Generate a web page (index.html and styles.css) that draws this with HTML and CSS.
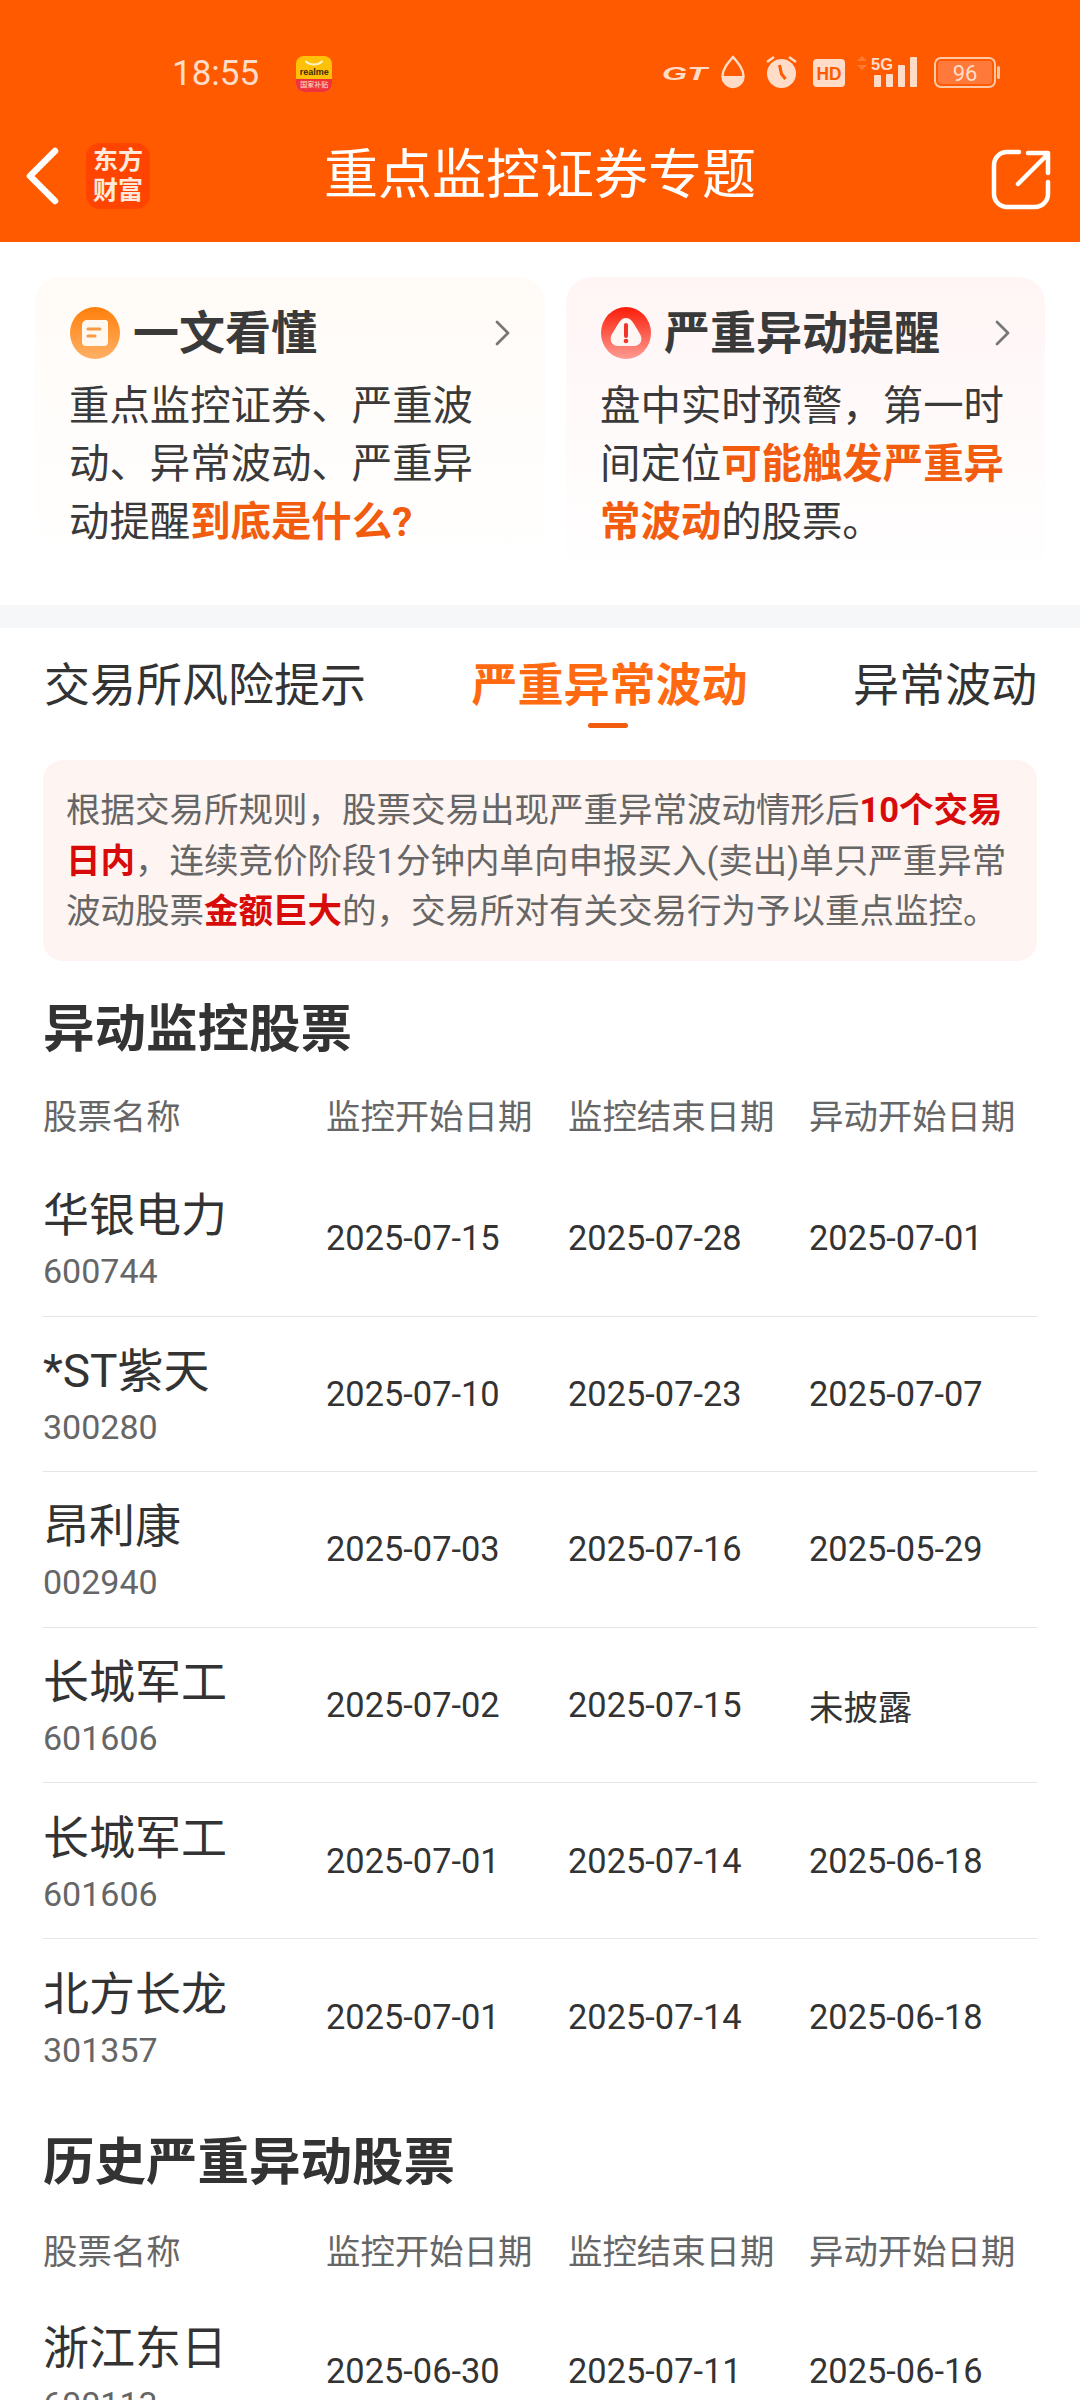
FILE: index.html
```html
<!DOCTYPE html>
<html lang="zh-CN">
  <head>
    <meta charset="UTF-8" />
    <meta name="viewport" content="width=device-width, initial-scale=1.0" />
    <title>重点监控证券专题</title>
    <link rel="stylesheet" href="styles.css">
  </head>
  <body>
    <div class="page">
      <header class="top">
        <div class="status-bar">
          <span class="time">18:55</span>
          <div class="app-badge">
            <svg class="app-smile" width="20" height="7" viewBox="0 0 20 7"><path d="M2 1.500c4 4 12 4 16 0" fill="none" stroke="#fff3c0" stroke-width="2" stroke-linecap="round"/></svg>
            <span class="app-name">realme</span>
            <span class="app-foot">国家补贴</span>
          </div>
          <svg class="status-icons" width="342" height="36" viewBox="660 54 342 36">
            <text x="662" y="80" font-family="Liberation Sans" font-size="19" font-weight="700" font-style="italic" fill="#ffdcc8" textLength="45" lengthAdjust="spacingAndGlyphs">GT</text>
            <path d="M733 57c5 6 10.500 12 10.500 19a10.500 11 0 0 1-21 0c0-7 5.500-13 10.500-19z" fill="none" stroke="#ffdcc8" stroke-width="2.400"/>
            <path d="M722.500 76h21a10.500 11.500 0 0 1-21 0z" fill="#ffdcc8"/>
            <circle cx="781.500" cy="73.500" r="14.500" fill="#ffdcc8"/>
            <path d="M779.500 65l2 9 4 5" fill="none" stroke="#ff5a00" stroke-width="3"/>
            <path d="M767 62l7-5M796 62l-7-5" stroke="#ffdcc8" stroke-width="2.600"/>
            <rect x="813" y="59" width="32" height="28" rx="4" fill="#ffdcc8"/>
            <text x="829" y="80" text-anchor="middle" font-family="Liberation Sans" font-size="19" font-weight="700" fill="#ff5a00" textLength="25" lengthAdjust="spacingAndGlyphs">HD</text>
            <path d="M862 56l5 5h-10zM862 70l5-5h-10z" fill="#ff7a33"/>
            <text x="871" y="70" font-family="Liberation Sans" font-size="17" font-weight="700" fill="#ffdcc8" textLength="22" lengthAdjust="spacingAndGlyphs">5G</text>
            <rect x="874" y="75" width="7" height="12" rx="1" fill="#ffdcc8"/>
            <rect x="886" y="74" width="7" height="13" rx="1" fill="#ffdcc8"/>
            <rect x="898" y="65" width="7" height="22" rx="1" fill="#ffdcc8"/>
            <rect x="910" y="57" width="7" height="30" rx="1" fill="#ffdcc8"/>
            <rect x="935" y="58" width="60" height="29" rx="6" fill="none" stroke="#ffc8a8" stroke-width="2"/>
            <rect x="938" y="61" width="54" height="23" rx="3" fill="#ff7a3a"/>
            <rect x="997" y="66" width="3" height="13" rx="1.500" fill="#ffc8a8"/>
            <text x="965" y="81" text-anchor="middle" font-family="Roboto" font-size="22" fill="#ffdcc8">96</text>
          </svg>
        </div>
        <nav class="nav">
          <svg class="back" width="40" height="60" viewBox="0 0 40 60"><path d="M32 5L7 30l25 25" fill="none" stroke="#fff" stroke-width="6.500" stroke-linecap="round" stroke-linejoin="round"/></svg>
          <div class="logo"><span>东方</span><span>财富</span></div>
          <h1 class="nav-title">重点监控证券专题</h1>
          <svg class="share" width="60" height="62" viewBox="0 0 60 62"><path d="M28 4H16A13 13 0 0 0 3 17v29a13 13 0 0 0 13 13h28a13 13 0 0 0 13-13V34" fill="none" stroke="#fff" stroke-width="4.500" stroke-linecap="round"/><path d="M27 36L56 7M37 5h20v20" fill="none" stroke="#fff" stroke-width="4.500" stroke-linecap="round" stroke-linejoin="round"/></svg>
        </nav>
      </header>

      <section class="cards">
        <div class="card card-left">
          <div class="card-head">
            <svg class="card-icon" width="52" height="52" viewBox="0 0 50 52"><defs><linearGradient id="ic1" x1="0" y1="0" x2="0" y2="1"><stop offset="0" stop-color="#ff7f0a"/><stop offset="1" stop-color="#ffb066"/></linearGradient></defs><ellipse cx="25" cy="26" rx="25" ry="26" fill="url(#ic1)"/><path d="M17 13h19a4 4 0 0 1 2 2v20a4 4 0 0 1-4 4H16a4 4 0 0 1-4-4V18a5 5 0 0 1 5-5z" fill="#fff8f0"/><path d="M18 22h12M18 29h7" stroke="#f59a45" stroke-width="3" stroke-linecap="round"/></svg>
            <h2 class="card-title">一文看懂</h2>
            <svg class="chev" width="16" height="26" viewBox="0 0 16 26"><path d="M2 2l11 11L2 24" fill="none" stroke="#777" stroke-width="2.800" stroke-linecap="round" stroke-linejoin="round"/></svg>
          </div>
          <p class="card-text">重点监控证券、严重波动、异常波动、严重异动提醒<b>到底是什么?</b></p>
        </div>
        <div class="card card-right">
          <div class="card-head">
            <svg class="card-icon" width="52" height="52" viewBox="0 0 50 52"><defs><linearGradient id="ic2" x1="0" y1="0" x2="0" y2="1"><stop offset="0" stop-color="#fa1c08"/><stop offset="1" stop-color="#ff9c92"/></linearGradient></defs><ellipse cx="25" cy="26" rx="25" ry="26" fill="url(#ic2)"/><path d="M25 11c4 0 6 3 8 6l6 10c3 5 1 12-6 12H17c-7 0-9-7-6-12l6-10c2-3 4-6 8-6z" fill="#fff5f3"/><path d="M25 18v11" stroke="#f0352a" stroke-width="4" stroke-linecap="round"/><circle cx="25" cy="34" r="2.300" fill="#f0352a"/></svg>
            <h2 class="card-title">严重异动提醒</h2>
            <svg class="chev" width="16" height="26" viewBox="0 0 16 26"><path d="M2 2l11 11L2 24" fill="none" stroke="#777" stroke-width="2.800" stroke-linecap="round" stroke-linejoin="round"/></svg>
          </div>
          <p class="card-text">盘中实时预警，第一时间定位<b>可能触发严重异常波动</b>的股票。</p>
        </div>
      </section>

      <div class="band"></div>

      <div class="tabs">
        <span class="tab">交易所风险提示</span>
        <span class="tab tab-active">严重异常波动</span>
        <span class="tab">异常波动</span>
      </div>

      <div class="notice">根据交易所规则，股票交易出现严重异常波动情形后<b>10个交易日内</b>，连续竞价阶段1分钟内单向申报买入(卖出)单只严重异常波动股票<b>金额巨大</b>的，交易所对有关交易行为予以重点监控。</div>

      <h2 class="section-title">异动监控股票</h2>
      <div class="table">
        <div class="row row-head"><span>股票名称</span><span>监控开始日期</span><span>监控结束日期</span><span>异动开始日期</span></div>
        <div class="row"><div class="stock"><div class="name">华银电力</div><div class="code">600744</div></div><span>2025-07-15</span><span>2025-07-28</span><span>2025-07-01</span></div>
        <div class="row"><div class="stock"><div class="name">*ST紫天</div><div class="code">300280</div></div><span>2025-07-10</span><span>2025-07-23</span><span>2025-07-07</span></div>
        <div class="row"><div class="stock"><div class="name">昂利康</div><div class="code">002940</div></div><span>2025-07-03</span><span>2025-07-16</span><span>2025-05-29</span></div>
        <div class="row"><div class="stock"><div class="name">长城军工</div><div class="code">601606</div></div><span>2025-07-02</span><span>2025-07-15</span><span>未披露</span></div>
        <div class="row"><div class="stock"><div class="name">长城军工</div><div class="code">601606</div></div><span>2025-07-01</span><span>2025-07-14</span><span>2025-06-18</span></div>
        <div class="row"><div class="stock"><div class="name">北方长龙</div><div class="code">301357</div></div><span>2025-07-01</span><span>2025-07-14</span><span>2025-06-18</span></div>
      </div>

      <h2 class="section-title section-history">历史严重异动股票</h2>
      <div class="table">
        <div class="row row-head"><span>股票名称</span><span>监控开始日期</span><span>监控结束日期</span><span>异动开始日期</span></div>
        <div class="row"><div class="stock"><div class="name">浙江东日</div><div class="code">600113</div></div><span>2025-06-30</span><span>2025-07-11</span><span>2025-06-16</span></div>
      </div>
    </div>
  </body>
</html>
```

FILE: styles.css
```css
* {
  box-sizing: border-box;
}
html,
body {
  margin: 0;
  padding: 0;
}
body {
  font-family: Roboto, "Noto Sans CJK SC", sans-serif;
  background-color: white;
  color: #333;
}
.page {
  width: 1080px;
  height: 2400px;
  overflow: hidden;
}
h1,
h2,
p {
  margin: 0;
  font-weight: normal;
}

/* header */
.top {
  height: 242px;
  background-color: #ff5a00;
}
.status-bar {
  height: 122px;
  padding: 52px 78px 0 172px;
  display: flex;
  align-items: flex-start;
}
.time {
  font-size: 35px;
  line-height: 44px;
  color: #ffdcc8;
}
.app-badge {
  width: 36px;
  height: 36px;
  margin: 4px 0 0 37px;
  border-radius: 8px;
  overflow: hidden;
  background-color: #ffc107;
  display: flex;
  flex-direction: column;
  align-items: center;
}
.app-smile {
  margin-top: 4px;
  flex: none;
}
.app-name {
  font-family: "Liberation Sans", sans-serif;
  font-weight: bold;
  font-size: 9px;
  line-height: 10px;
  color: #3a2a00;
}
.app-foot {
  margin-top: auto;
  width: 100%;
  height: 13px;
  background-color: #f0333a;
  color: #ffe4d8;
  font-size: 7px;
  line-height: 12px;
  text-align: center;
}
.status-icons {
  margin-left: auto;
  margin-top: 2px;
}
.nav {
  height: 120px;
  padding: 0 29px 0 23px;
  display: flex;
  align-items: flex-start;
}
.back {
  margin-top: 24px;
  flex: none;
}
.logo {
  width: 64px;
  height: 66px;
  margin: 21px 0 0 23px;
  background-color: #ff4400;
  border-radius: 14px;
  display: flex;
  flex-direction: column;
  align-items: center;
  justify-content: center;
  color: #ffe9dd;
  font-weight: bold;
  font-size: 25px;
  line-height: 30px;
  flex: none;
}
.nav-title {
  margin: 18px 0 0 174px;
  font-size: 54px;
  line-height: 72px;
  color: white;
  white-space: nowrap;
}
.share {
  margin: 26px 0 0 auto;
  flex: none;
}

/* two cards */
.cards {
  height: 363px;
  padding: 35px 35px 0 35px;
  display: flex;
  gap: 21px;
}
.card {
  height: 300px;
  padding: 30px 0 0 34px;
  border-radius: 26px;
}
.card-left {
  width: 510px;
  background: linear-gradient(#fffbf7, white);
}
.card-right {
  width: 479px;
  background: linear-gradient(#fff5f5, white);
}
.card-head {
  height: 52px;
  display: flex;
  align-items: center;
}
.card-icon {
  flex: none;
}
.card-title {
  margin-left: 12px;
  font-size: 46px;
  line-height: 52px;
  font-weight: bold;
  color: #3a3a3a;
  white-space: nowrap;
}
.chev {
  margin-left: auto;
  margin-right: 34px;
  flex: none;
}
.card-text {
  width: 408px;
  margin-top: 19px;
  font-size: 40.400px;
  line-height: 58px;
  color: #3a3a3a;
}
.card-text b {
  color: #f25c0f;
}

.band {
  height: 23px;
  background-color: #f6f7f9;
}

/* tabs */
.tabs {
  height: 132px;
  padding: 27px 43px 0 44px;
  display: flex;
  justify-content: space-between;
}
.tab {
  position: relative;
  font-size: 46px;
  line-height: 60px;
  color: #333;
  white-space: nowrap;
}
.tab-active {
  font-weight: bold;
  color: #ff6a10;
}
.tab-active::after {
  content: "";
  position: absolute;
  left: 116px;
  top: 68px;
  width: 40px;
  height: 5px;
  border-radius: 3px;
  background-color: #f25c0f;
}

/* notice */
.notice {
  height: 201px;
  margin: 0 43px;
  padding: 25px 25px 0 23px;
  background-color: #fef4f1;
  border-radius: 20px;
  font-size: 34.500px;
  line-height: 50.500px;
  color: #666;
}
.notice b {
  color: #d80b0b;
}

/* tables */
.section-title {
  margin: 35px 0 0 43px;
  font-size: 51.500px;
  line-height: 68px;
  font-weight: bold;
  color: #333;
}
.section-history {
  margin-top: 34px;
}
.section-history + .table .row-head {
  padding-top: 7px;
}
.table {
  margin: 0 43px 0 43px;
}
.row {
  height: 155.600px;
  display: grid;
  grid-template-columns: 283px 242px 241px 227px;
  align-items: center;
  font-size: 34.400px;
  color: #333;
  border-bottom: 1px solid #e6e6e6;
}
.row:last-child {
  border-bottom: none;
}
.row-head {
  height: 97px;
  padding-top: 3px;
  color: #666;
  border-bottom: none;
}
.stock {
  padding-top: 2px;
}
.name {
  font-size: 46px;
  line-height: 62px;
  color: #333;
}
.code {
  margin-top: 2px;
  font-size: 34px;
  line-height: 46px;
  color: #666;
}
```
